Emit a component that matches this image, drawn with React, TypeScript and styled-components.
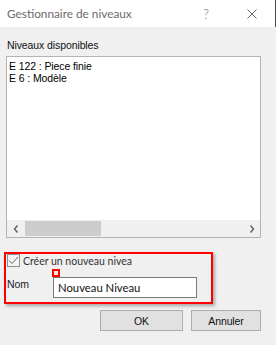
import React from "react";
import styled, { createGlobalStyle } from "styled-components";

const Global = createGlobalStyle`
  html, body { margin: 0; padding: 0; background: #f0f0f0; }
  * { box-sizing: border-box; }
`;

const Window = styled.div`
  width: 276px;
  height: 345px;
  background: #f0f0f0;
  display: flex;
  flex-direction: column;
  font-family: "Liberation Sans", Arial, sans-serif;
  font-size: 10.5px;
  letter-spacing: -0.1px;
  color: #000;
  overflow: hidden;
`;

const TitleBar = styled.div`
  height: 27px;
  flex: none;
  background: #fff;
  display: flex;
  align-items: stretch;
  border-right: 1px solid #4a4a4a;
`;

const Title = styled.div`
  flex: 1;
  display: flex;
  align-items: center;
  padding-left: 7px;
  font-family: Lato, "Segoe UI", sans-serif;
  font-size: 11.8px;
  letter-spacing: 0;
  color: #6b6b6b;
`;

const CaptionButton = styled.div`
  width: 46px;
  display: flex;
  align-items: center;
  justify-content: center;
  font-family: Lato, sans-serif;
  font-weight: 300;
  font-size: 13px;
  color: #7a7a7a;
`;

const Body = styled.div`
  flex: 1;
  display: flex;
  flex-direction: column;
  padding: 12px 15px 0 6px;
`;

const GroupLabel = styled.div`
  line-height: 13px;
  margin-bottom: 4px;
  padding-left: 1px;
  color: #111;
`;

const ListBox = styled.div`
  height: 182px;
  border: 1px solid #b4b4b4;
  background: #fff;
  display: flex;
  flex-direction: column;
`;

const ListItems = styled.div`
  flex: 1;
  padding: 3px 2px 0 2px;
`;

const ListItem = styled.div`
  line-height: 12px;
  white-space: nowrap;
`;

const HScroll = styled.div`
  height: 17px;
  background: #f0f0f0;
  display: flex;
  align-items: center;
`;

const ScrollArrow = styled.div`
  width: 17px;
  height: 17px;
  display: flex;
  align-items: center;
  justify-content: center;
`;

const ScrollTrack = styled.div`
  flex: 1;
  height: 17px;
  display: flex;
  align-items: center;
  padding-left: 1px;
`;

const ScrollThumb = styled.div`
  width: 76px;
  height: 15px;
  background: #cdcdcd;
`;

const Highlight = styled.div`
  position: relative;
  margin: 14px 0 0 -2px;
  width: 209px;
  border: 2px solid #ff0000;
  box-shadow: 2px 2px 3px rgba(0, 0, 0, 0.3);
  padding: 0 0 4px 1px;
  display: flex;
  flex-direction: column;
  gap: 10px;
`;

const Marker = styled.div`
  position: absolute;
  left: 46px;
  top: 15px;
  width: 8px;
  height: 8px;
  border: 2px solid #ff0000;
  background: #fde8e8;
`;

const CheckRow = styled.div`
  height: 13px;
  display: flex;
  align-items: center;
  gap: 3px;
`;

const CheckBox = styled.div`
  width: 13px;
  height: 13px;
  border: 1px solid #8f8f8f;
  background: #f4f4f4;
  display: flex;
  align-items: center;
  justify-content: center;
`;

const CheckLabel = styled.span`
  font-family: Lato, "Segoe UI", sans-serif;
  font-size: 10.5px;
  letter-spacing: 0;
  color: #333;
  white-space: nowrap;
`;

const NameRow = styled.div`
  display: flex;
  align-items: flex-start;
`;

const NameLabel = styled.div`
  width: 46px;
  line-height: 13px;
  padding-top: 1px;
  color: #222;
`;

const TextInput = styled.div`
  width: 144px;
  height: 21px;
  border: 1px solid #7a7a7a;
  background: #fff;
  display: flex;
  align-items: center;
  padding-left: 4px;
  font-family: Lato, "Segoe UI", sans-serif;
  font-size: 11.3px;
  letter-spacing: 0;
  color: #111;
`;

const ButtonRow = styled.div`
  margin-top: 6px;
  display: flex;
  justify-content: flex-end;
  gap: 8px;
`;

const Button = styled.div<{ $w: number }>`
  width: ${(p) => p.$w}px;
  height: 21px;
  border: 1px solid #adadad;
  background: #e1e1e1;
  display: flex;
  align-items: center;
  justify-content: center;
  color: #111;
`;

export default function App() {
  return (
    <Window>
      <Global />
      <TitleBar>
        <Title>Gestionnaire de niveaux</Title>
        <CaptionButton>?</CaptionButton>
        <CaptionButton>
          <svg width="10" height="10" viewBox="0 0 10 10">
            <path d="M0.5 0.5 L9.5 9.5 M9.5 0.5 L0.5 9.5" stroke="#666" strokeWidth="1" fill="none" />
          </svg>
        </CaptionButton>
      </TitleBar>
      <Body>
        <GroupLabel>Niveaux disponibles</GroupLabel>
        <ListBox>
          <ListItems>
            <ListItem>E 122 : Piece finie</ListItem>
            <ListItem>E 6 : Modèle</ListItem>
          </ListItems>
          <HScroll>
            <ScrollArrow>
              <svg width="6" height="8" viewBox="0 0 6 8">
                <path d="M4.5 0.5 L1.5 4 L4.5 7.5" stroke="#606060" strokeWidth="1.4" fill="none" />
              </svg>
            </ScrollArrow>
            <ScrollTrack>
              <ScrollThumb />
            </ScrollTrack>
            <ScrollArrow>
              <svg width="6" height="8" viewBox="0 0 6 8">
                <path d="M1.5 0.5 L4.5 4 L1.5 7.5" stroke="#606060" strokeWidth="1.4" fill="none" />
              </svg>
            </ScrollArrow>
          </HScroll>
        </ListBox>
        <Highlight>
          <CheckRow>
            <CheckBox>
              <svg width="11" height="9" viewBox="0 0 11 9">
                <path d="M1 4.5 L4 7.5 L10 1" stroke="#666" strokeWidth="1" fill="none" />
              </svg>
            </CheckBox>
            <CheckLabel>Créer un nouveau nivea</CheckLabel>
          </CheckRow>
          <NameRow>
            <NameLabel>Nom</NameLabel>
            <TextInput>Nouveau Niveau</TextInput>
          </NameRow>
          <Marker />
        </Highlight>
        <ButtonRow>
          <Button $w={83}>OK</Button>
          <Button $w={70}>Annuler</Button>
        </ButtonRow>
      </Body>
    </Window>
  );
}
